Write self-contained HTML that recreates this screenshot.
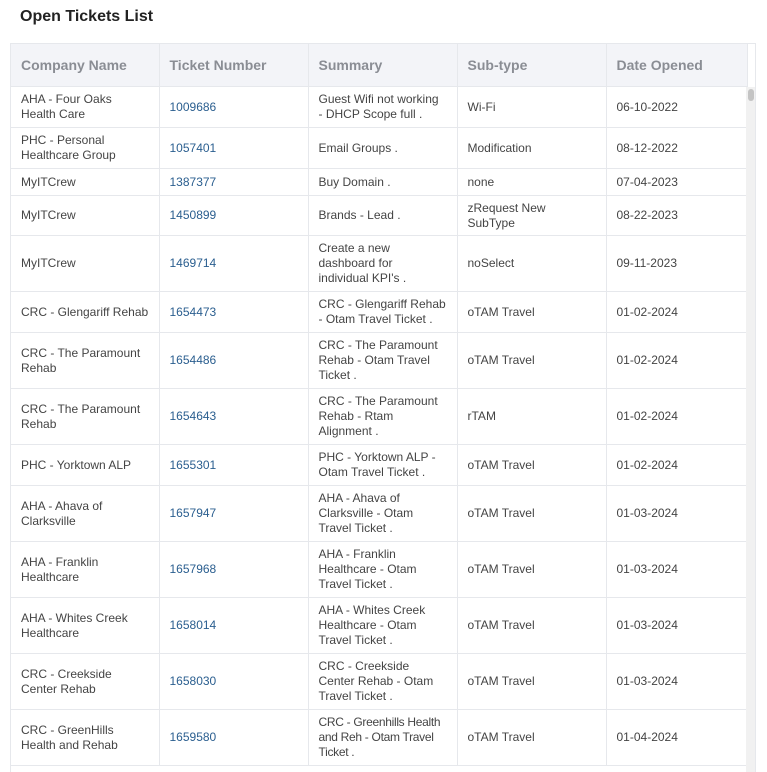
<!DOCTYPE html><html><head><style>
body{margin:0;background:#fff;font-family:"Liberation Sans",sans-serif;width:767px;height:772px;overflow:hidden;position:relative}
h1{position:absolute;left:20px;top:8px;margin:0;font-size:16px;font-weight:bold;color:#222}
.wrap{position:absolute;left:10px;top:43px;width:746px;height:729px;border:1px solid #e6e8ec;border-bottom:none;box-sizing:border-box;overflow:hidden}
table{border-collapse:collapse;table-layout:fixed;width:736px}
td,th{border-right:1px solid #e6e8ec;border-bottom:1px solid #e6e8ec;padding:0 10px;font-size:12px;line-height:15px;text-align:left;vertical-align:middle;color:#444;white-space:nowrap;overflow:hidden}
th{background:#f3f4f8;height:42px;font-size:14px;color:#8a8d94;font-weight:bold}
td:nth-child(2){color:#2a5e8f}
.sb{position:absolute;left:735px;top:43px;width:10px;height:695px;background:#f1f1f1}
.th{position:absolute;left:2px;top:2px;width:6px;height:12px;border-radius:3px;background:#c4c4c4}
</style></head><body>
<h1>Open Tickets List</h1>
<div class="wrap">
<table>
<colgroup><col style="width:148px"><col style="width:149px"><col style="width:149px"><col style="width:149px"><col style="width:141px"></colgroup>
<tr><th>Company Name</th><th>Ticket Number</th><th>Summary</th><th>Sub-type</th><th>Date Opened</th></tr>
<tr style="height:41px"><td>AHA - Four Oaks<br>Health Care</td><td>1009686</td><td>Guest Wifi not working<br>- DHCP Scope full .</td><td>Wi-Fi</td><td>06-10-2022</td></tr>
<tr style="height:41px"><td>PHC - Personal<br>Healthcare Group</td><td>1057401</td><td>Email Groups .</td><td>Modification</td><td>08-12-2022</td></tr>
<tr style="height:27px"><td>MyITCrew</td><td>1387377</td><td>Buy Domain .</td><td>none</td><td>07-04-2023</td></tr>
<tr style="height:40px"><td>MyITCrew</td><td>1450899</td><td>Brands - Lead .</td><td>zRequest New<br>SubType</td><td>08-22-2023</td></tr>
<tr style="height:56px"><td>MyITCrew</td><td>1469714</td><td>Create a new<br>dashboard for<br>individual KPI's .</td><td>noSelect</td><td>09-11-2023</td></tr>
<tr style="height:41px"><td>CRC - Glengariff Rehab</td><td>1654473</td><td>CRC - Glengariff Rehab<br>- Otam Travel Ticket .</td><td>oTAM Travel</td><td>01-02-2024</td></tr>
<tr style="height:56px"><td>CRC - The Paramount<br>Rehab</td><td>1654486</td><td>CRC - The Paramount<br>Rehab - Otam Travel<br>Ticket .</td><td>oTAM Travel</td><td>01-02-2024</td></tr>
<tr style="height:56px"><td>CRC - The Paramount<br>Rehab</td><td>1654643</td><td>CRC - The Paramount<br>Rehab - Rtam<br>Alignment .</td><td>rTAM</td><td>01-02-2024</td></tr>
<tr style="height:41px"><td>PHC - Yorktown ALP</td><td>1655301</td><td>PHC - Yorktown ALP -<br>Otam Travel Ticket .</td><td>oTAM Travel</td><td>01-02-2024</td></tr>
<tr style="height:56px"><td>AHA - Ahava of<br>Clarksville</td><td>1657947</td><td>AHA - Ahava of<br>Clarksville - Otam<br>Travel Ticket .</td><td>oTAM Travel</td><td>01-03-2024</td></tr>
<tr style="height:56px"><td>AHA - Franklin<br>Healthcare</td><td>1657968</td><td>AHA - Franklin<br>Healthcare - Otam<br>Travel Ticket .</td><td>oTAM Travel</td><td>01-03-2024</td></tr>
<tr style="height:56px"><td>AHA - Whites Creek<br>Healthcare</td><td>1658014</td><td>AHA - Whites Creek<br>Healthcare - Otam<br>Travel Ticket .</td><td>oTAM Travel</td><td>01-03-2024</td></tr>
<tr style="height:56px"><td>CRC - Creekside<br>Center Rehab</td><td>1658030</td><td>CRC - Creekside<br>Center Rehab - Otam<br>Travel Ticket .</td><td>oTAM Travel</td><td>01-03-2024</td></tr>
<tr style="height:56px"><td>CRC - GreenHills<br>Health and Rehab</td><td>1659580</td><td style="letter-spacing:-0.3px">CRC - Greenhills Health<br>and Reh - Otam Travel<br>Ticket .</td><td>oTAM Travel</td><td>01-04-2024</td></tr>
</table>
<div class="sb"><div class="th"></div></div>
</div>
</body></html>
